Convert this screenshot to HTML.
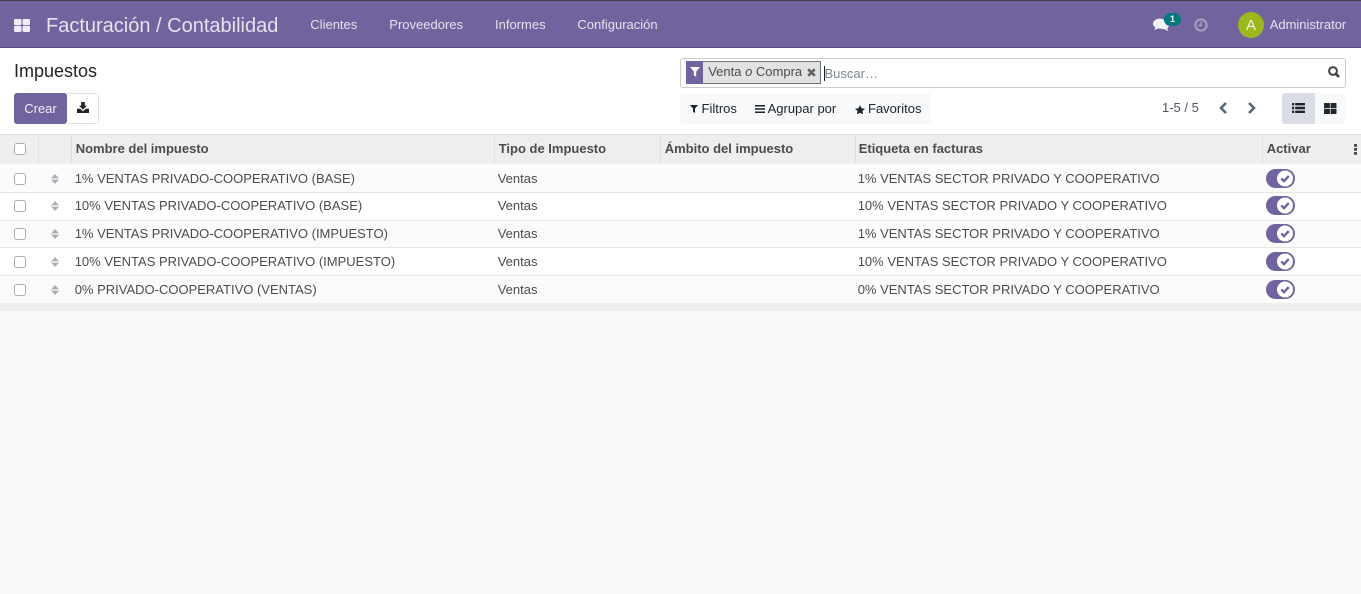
<!DOCTYPE html>
<html><head><meta charset="utf-8">
<style>
*{box-sizing:border-box}
html,body{margin:0;padding:0;width:1361px;height:594px;overflow:hidden;background:#f9f9fb;font-family:"Liberation Sans",sans-serif;font-size:13px;color:#4c4c4c}
.a{position:absolute;white-space:nowrap}
svg{position:absolute;display:block}
.nav{color:#e6e2ee;font-size:13px;top:17px;line-height:16px}
.th{top:141px;font-weight:bold;font-size:13px;line-height:15px;color:#4c4c4c}
.td{font-size:13px;line-height:15px;color:#4c4c4c}
.cb{position:absolute;left:14px;width:12px;height:12px;border:1px solid #a8adb5;border-radius:3px;background:#fff}
.row{position:absolute;left:0;width:1361px;border-bottom:1px solid #e6e6e6}
.sep{position:absolute;top:136px;width:1px;height:27px;background:#e0e0e0}
</style></head><body>
<div class="a" style="left:0;top:0;width:1361px;height:48px;background:#71639e;border-top:1px solid #3f3f46;border-bottom:1px solid #554a7e"></div>
<svg style="left:14px;top:19px" width="16" height="13" viewBox="0 0 16 13"><rect x="0" y="0" width="7.5" height="6.1" rx="1.2" fill="#f0edf6"/><rect x="8.5" y="0" width="7.5" height="6.1" rx="1.2" fill="#f0edf6"/><rect x="0" y="6.9" width="7.5" height="6.1" rx="1.2" fill="#f0edf6"/><rect x="8.5" y="6.9" width="7.5" height="6.1" rx="1.2" fill="#f0edf6"/></svg>
<div class="a" style="left:46px;top:14px;font-size:20px;line-height:24px;color:#e6e2ee">Facturación / Contabilidad</div>
<div class="a nav" style="left:310.3px">Clientes</div>
<div class="a nav" style="left:389.3px">Proveedores</div>
<div class="a nav" style="left:495px">Informes</div>
<div class="a nav" style="left:577.4px">Configuración</div>
<svg style="left:1153px;top:18px" width="16" height="14" viewBox="0 0 16 14"><ellipse cx="6.8" cy="5.6" rx="6.8" ry="5" fill="#f2f0f7"/><path d="M2.5 8.5L1.5 12L6 10Z" fill="#f2f0f7"/><path d="M13.8 4C15.4 5 16.2 6.5 15.8 8C15.4 9.3 14.8 10 14.2 10.4L15.2 13L11 11C9.5 11.2 8 11 6.5 10.5C10 10.5 14.3 8.5 13.8 4Z" fill="#f2f0f7"/></svg>
<div class="a" style="left:1164px;top:13px;width:17px;height:13px;border-radius:7px;background:#00797f;color:#fff;font-size:9px;font-weight:bold;line-height:13px;text-align:center">1</div>
<svg style="left:1194px;top:18px" width="14" height="14" viewBox="0 0 14 14" fill="none"><circle cx="7" cy="7" r="5.6" stroke="#a79fc4" stroke-width="2"/><path d="M7.3 3.5V7.5H4.2" stroke="#a79fc4" stroke-width="1.5"/></svg>
<div class="a" style="left:1238px;top:12px;width:26px;height:26px;border-radius:50%;background:#9db81f;color:#f4f6e0;font-size:15px;line-height:27px;text-align:center">A</div>
<div class="a nav" style="left:1269.7px">Administrator</div>

<div class="a" style="left:0;top:48px;width:1361px;height:87px;background:#fff"></div>
<div class="a" style="left:14px;top:61px;font-size:18px;line-height:21px;color:#212529">Impuestos</div>
<div class="a" style="left:67px;top:93px;width:32px;height:31px;background:#fff;border:1px solid #dee2e6;border-left:0;border-radius:0 3px 3px 0"></div>
<div class="a" style="left:14px;top:93px;width:53px;height:31px;background:#71639e;border-radius:3px;color:#f0eef5;font-size:13px;line-height:31px;text-align:center">Crear</div>
<svg style="left:77px;top:102px" width="12" height="11" viewBox="0 0 12 11"><path d="M4.2 0H7.8V3.6H10L6 7.6L2 3.6H4.2Z" fill="#212529"/><path d="M0 6.8H3.2L6 9.2L8.8 6.8H12V11H0Z" fill="#212529"/></svg>

<div class="a" style="left:680px;top:58px;width:666px;height:30px;background:#fff;border:1px solid #ccc;border-radius:3px"></div>
<div class="a" style="left:686px;top:61px;width:135px;height:23px;background:#e2e2e0;border:1px solid #6c757d"></div>
<div class="a" style="left:686px;top:61px;width:17px;height:23px;background:#71639e"></div>
<svg style="left:690px;top:67px" width="10" height="10" viewBox="0 0 10 10"><path d="M0 0H10L6.2 4.5V10L3.8 8.2V4.5Z" fill="#fff"/></svg>
<div class="a" style="left:708.2px;top:64px;font-size:13px;line-height:15px;color:#4c4c4c">Venta <i>o</i> Compra</div>
<svg style="left:807px;top:68px" width="9" height="9" viewBox="0 0 9 9"><path d="M1.2 1.2L7.8 7.8M7.8 1.2L1.2 7.8" stroke="#5f6368" stroke-width="2.6"/></svg>
<div class="a" style="left:824px;top:66px;width:1px;height:15px;background:#222"></div>
<div class="a" style="left:824.5px;top:66px;font-size:13px;line-height:15px;color:#7b8590">Buscar…</div>
<svg style="left:1328px;top:66px" width="12" height="12" viewBox="0 0 12 12" fill="none"><circle cx="5" cy="5" r="3.9" stroke="#3b4248" stroke-width="2"/><path d="M7.8 7.8L11 11" stroke="#3b4248" stroke-width="2.6"/></svg>

<div class="a" style="left:680px;top:93px;width:251px;height:31px;background:#f8f9fa;border-radius:3px"></div>
<svg style="left:690px;top:105px" width="8" height="8" viewBox="0 0 8 8"><path d="M0 0H8L5 3.5V8L3 6.8V3.5Z" fill="#212529"/></svg>
<div class="a" style="left:701.5px;top:101px;font-size:13px;line-height:15px;color:#212529">Filtros</div>
<svg style="left:755px;top:105px" width="10" height="8" viewBox="0 0 10 8"><path d="M0 .8H10M0 4H10M0 7.2H10" stroke="#212529" stroke-width="1.5"/></svg>
<div class="a" style="left:767.6px;top:101px;font-size:13px;line-height:15px;color:#212529">Agrupar por</div>
<svg style="left:855px;top:104.5px" width="10" height="9.5" viewBox="0 0 10 9.5"><path d="M5 0L6.5 3.3L10 3.7L7.4 6L8.1 9.5L5 7.7L1.9 9.5L2.6 6L0 3.7L3.5 3.3Z" fill="#212529"/></svg>
<div class="a" style="left:868px;top:101px;font-size:13px;line-height:15px;color:#212529">Favoritos</div>

<div class="a" style="left:1162px;top:100px;font-size:13px;line-height:15px;color:#4c5660">1-5 / 5</div>
<svg style="left:1219px;top:102px" width="9" height="12" viewBox="0 0 9 12" fill="none"><path d="M7 1L2 6L7 11" stroke="#5c6670" stroke-width="2.6"/></svg>
<svg style="left:1247px;top:102px" width="9" height="12" viewBox="0 0 9 12" fill="none"><path d="M2 1L7 6L2 11" stroke="#5c6670" stroke-width="2.6"/></svg>
<div class="a" style="left:1282px;top:93px;width:33px;height:31px;background:#dadde6;border-radius:3px 0 0 3px"></div>
<div class="a" style="left:1315px;top:93px;width:31px;height:31px;background:#f8f9fa;border-radius:0 3px 3px 0"></div>
<svg style="left:1292px;top:103px" width="13" height="10" viewBox="0 0 13 10"><path d="M0 1.2H2.2M3.2 1.2H13M0 5H2.2M3.2 5H13M0 8.8H2.2M3.2 8.8H13" stroke="#212529" stroke-width="2.4"/></svg>
<svg style="left:1324px;top:102.5px" width="12.5" height="11" viewBox="0 0 12.5 11"><rect x="0" y="0" width="5.9" height="5.1" rx=".6" fill="#212529"/><rect x="6.6" y="0" width="5.9" height="5.1" rx=".6" fill="#212529"/><rect x="0" y="5.9" width="5.9" height="5.1" rx=".6" fill="#212529"/><rect x="6.6" y="5.9" width="5.9" height="5.1" rx=".6" fill="#212529"/></svg>

<div class="a" style="left:0;top:134px;width:1361px;height:30px;background:#eeeeee;border-top:1px solid #dcdcdc"></div>
<div class="sep" style="left:38px"></div><div class="sep" style="left:71px"></div><div class="sep" style="left:494px"></div><div class="sep" style="left:660px"></div><div class="sep" style="left:855px"></div><div class="sep" style="left:1262px"></div>
<div class="cb" style="top:143px"></div>
<div class="a th" style="left:75.7px">Nombre del impuesto</div>
<div class="a th" style="left:498.7px">Tipo de Impuesto</div>
<div class="a th" style="left:664.7px">Ámbito del impuesto</div>
<div class="a th" style="left:858.7px">Etiqueta en facturas</div>
<div class="a th" style="left:1266.7px">Activar</div>
<svg style="left:1354px;top:144px" width="3" height="11" viewBox="0 0 3 11"><rect x="0" y="0" width="3" height="2.8" fill="#4c4c4c"/><rect x="0" y="4" width="3" height="2.8" fill="#4c4c4c"/><rect x="0" y="8" width="3" height="2.8" fill="#4c4c4c"/></svg>

<div class="row" style="top:164px;height:29px;background:#fbfbfb"></div>
<div class="row" style="top:193px;height:28px;background:#fff"></div>
<div class="row" style="top:221px;height:27px;background:#fbfbfb"></div>
<div class="row" style="top:248px;height:28px;background:#fff"></div>
<div class="row" style="top:276px;height:27px;background:#fbfbfb;border-bottom:0"></div>
<div class="a" style="left:0;top:303px;width:1361px;height:8px;background:#eeeeee"></div>

<div class="cb" style="top:173px"></div>
<div class="cb" style="top:200px"></div>
<div class="cb" style="top:228px"></div>
<div class="cb" style="top:256px"></div>
<div class="cb" style="top:284px"></div>

<svg style="left:50.5px;top:174px" width="8" height="10" viewBox="0 0 8 10"><path d="M4 0L8 4.4H0ZM4 10L0 5.6H8Z" fill="#a9b0b8"/></svg>
<svg style="left:50.5px;top:201px" width="8" height="10" viewBox="0 0 8 10"><path d="M4 0L8 4.4H0ZM4 10L0 5.6H8Z" fill="#a9b0b8"/></svg>
<svg style="left:50.5px;top:229px" width="8" height="10" viewBox="0 0 8 10"><path d="M4 0L8 4.4H0ZM4 10L0 5.6H8Z" fill="#a9b0b8"/></svg>
<svg style="left:50.5px;top:257px" width="8" height="10" viewBox="0 0 8 10"><path d="M4 0L8 4.4H0ZM4 10L0 5.6H8Z" fill="#a9b0b8"/></svg>
<svg style="left:50.5px;top:285px" width="8" height="10" viewBox="0 0 8 10"><path d="M4 0L8 4.4H0ZM4 10L0 5.6H8Z" fill="#a9b0b8"/></svg>

<div class="a td" style="left:74.7px;top:171px">1% VENTAS PRIVADO-COOPERATIVO (BASE)</div>
<div class="a td" style="left:497.7px;top:171px">Ventas</div>
<div class="a td" style="left:857.7px;top:171px">1% VENTAS SECTOR PRIVADO Y COOPERATIVO</div>
<div class="a td" style="left:74.7px;top:198px">10% VENTAS PRIVADO-COOPERATIVO (BASE)</div>
<div class="a td" style="left:497.7px;top:198px">Ventas</div>
<div class="a td" style="left:857.7px;top:198px">10% VENTAS SECTOR PRIVADO Y COOPERATIVO</div>
<div class="a td" style="left:74.7px;top:226px">1% VENTAS PRIVADO-COOPERATIVO (IMPUESTO)</div>
<div class="a td" style="left:497.7px;top:226px">Ventas</div>
<div class="a td" style="left:857.7px;top:226px">1% VENTAS SECTOR PRIVADO Y COOPERATIVO</div>
<div class="a td" style="left:74.7px;top:254px">10% VENTAS PRIVADO-COOPERATIVO (IMPUESTO)</div>
<div class="a td" style="left:497.7px;top:254px">Ventas</div>
<div class="a td" style="left:857.7px;top:254px">10% VENTAS SECTOR PRIVADO Y COOPERATIVO</div>
<div class="a td" style="left:74.7px;top:282px">0% PRIVADO-COOPERATIVO (VENTAS)</div>
<div class="a td" style="left:497.7px;top:282px">Ventas</div>
<div class="a td" style="left:857.7px;top:282px">0% VENTAS SECTOR PRIVADO Y COOPERATIVO</div>

<svg style="left:1266px;top:169px" width="29" height="19" viewBox="0 0 29 19"><rect x="0" y="0" width="29" height="19" rx="9.5" fill="#71639e"/><circle cx="19" cy="9.5" r="8" fill="#fff"/><path d="M15.3 9.5L18 12.2L22.8 7" fill="none" stroke="#71639e" stroke-width="2.4"/></svg>
<svg style="left:1266px;top:196px" width="29" height="19" viewBox="0 0 29 19"><rect x="0" y="0" width="29" height="19" rx="9.5" fill="#71639e"/><circle cx="19" cy="9.5" r="8" fill="#fff"/><path d="M15.3 9.5L18 12.2L22.8 7" fill="none" stroke="#71639e" stroke-width="2.4"/></svg>
<svg style="left:1266px;top:224px" width="29" height="19" viewBox="0 0 29 19"><rect x="0" y="0" width="29" height="19" rx="9.5" fill="#71639e"/><circle cx="19" cy="9.5" r="8" fill="#fff"/><path d="M15.3 9.5L18 12.2L22.8 7" fill="none" stroke="#71639e" stroke-width="2.4"/></svg>
<svg style="left:1266px;top:252px" width="29" height="19" viewBox="0 0 29 19"><rect x="0" y="0" width="29" height="19" rx="9.5" fill="#71639e"/><circle cx="19" cy="9.5" r="8" fill="#fff"/><path d="M15.3 9.5L18 12.2L22.8 7" fill="none" stroke="#71639e" stroke-width="2.4"/></svg>
<svg style="left:1266px;top:280px" width="29" height="19" viewBox="0 0 29 19"><rect x="0" y="0" width="29" height="19" rx="9.5" fill="#71639e"/><circle cx="19" cy="9.5" r="8" fill="#fff"/><path d="M15.3 9.5L18 12.2L22.8 7" fill="none" stroke="#71639e" stroke-width="2.4"/></svg>
</body></html>
